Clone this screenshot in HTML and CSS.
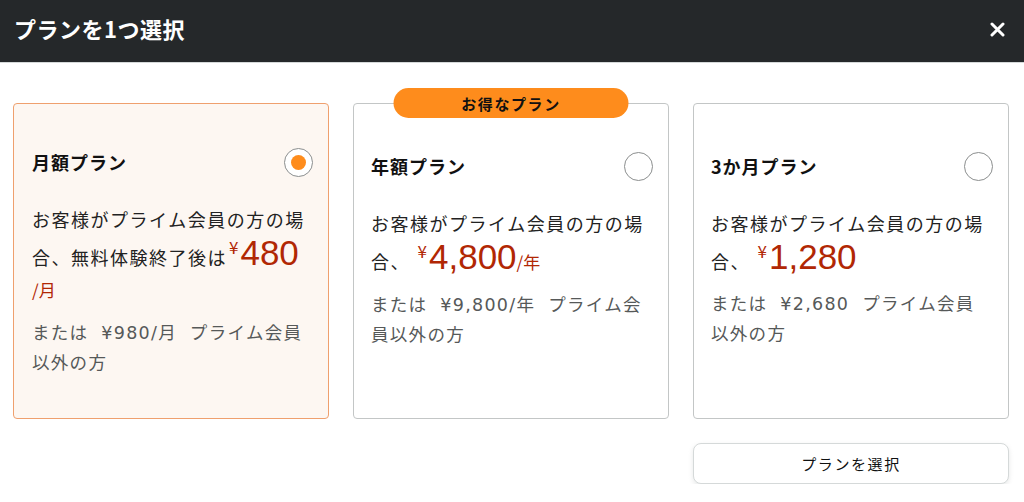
FILE: index.html
```html
<!DOCTYPE html>
<html lang="ja">
<head>
<meta charset="utf-8">
<title>プランを1つ選択</title>
<link rel="stylesheet" href="styles.css">
</head>
<body>
<div class="modal">
  <header class="modal-head">
    <h1 class="modal-title">プランを1つ選択</h1>
    <button class="close" aria-label="閉じる">
      <svg width="15" height="15" viewBox="0 0 15 15"><path d="M2 2 L13 13 M13 2 L2 13" stroke="#fff" stroke-width="3" stroke-linecap="round"/></svg>
    </button>
  </header>
  <main class="plans">
    <div class="card card-selected">
      <div class="card-head">
        <h2 class="card-title">月額プラン</h2>
        <span class="radio radio-on"></span>
      </div>
      <p class="desc">お客様がプライム会員の方の場合、無料体験終了後は<span class="price"><span class="yen">¥</span>480</span><wbr><span class="per">/月</span></p>
      <p class="alt">または ¥980/月 プライム会員以外の方</p>
    </div>
    <div class="card">
      <span class="badge">お得なプラン</span>
      <div class="card-head">
        <h2 class="card-title">年額プラン</h2>
        <span class="radio"></span>
      </div>
      <p class="desc">お客様がプライム会員の方の場合、 <span class="price"><span class="yen">¥</span>4,800</span><span class="per">/年</span></p>
      <p class="alt">または ¥9,800/年 プライム会員以外の方</p>
    </div>
    <div class="card">
      <div class="card-head">
        <h2 class="card-title">3か月プラン</h2>
        <span class="radio"></span>
      </div>
      <p class="desc">お客様がプライム会員の方の場合、 <span class="price"><span class="yen">¥</span>1,280</span></p>
      <p class="alt">または ¥2,680 プライム会員以外の方</p>
    </div>
    <div class="actions">
      <button class="select-btn">プランを選択</button>
    </div>
  </main>
</div>
</body>
</html>
```
FILE: styles.css
```css
* { box-sizing: border-box; }
html, body { margin: 0; padding: 0; background: #fff; }
body {
  font-family: "Noto Sans CJK JP", "Noto Sans", sans-serif;
  color: #0f1111;
}
.modal { width: 1024px; }
.modal-head {
  height: 63px;
  background: #25282a;
  border-bottom: 1px solid #d5d9d9;
  display: flex;
  align-items: center;
  justify-content: space-between;
  padding: 0 19px 0 14px;
}
.modal-title {
  margin: 0;
  color: #fff;
  font-size: 22px;
  font-weight: 700;
  letter-spacing: 0.5px;
  line-height: 1;
  padding-bottom: 6px;
}
.close {
  background: none;
  border: 0;
  padding: 0;
  display: flex;
  margin-bottom: 4px;
}
.plans {
  display: grid;
  grid-template-columns: repeat(3, 1fr);
  column-gap: 24px;
  row-gap: 24px;
  padding: 40px 15px 0 13px;
}
.card {
  position: relative;
  height: 316px;
  border: 1px solid #c3c6c6;
  border-radius: 4px;
  padding: 47px 15px 0 17px;
  background: #fff;
}
.card-selected {
  background: #fdf7f2;
  border-color: #efa06e;
  padding-top: 43px;
  padding-left: 18px;
}
.badge {
  position: absolute;
  top: -16px;
  left: 50%;
  transform: translateX(-50%);
  width: 235px;
  height: 30px;
  border-radius: 15px;
  background: #fe8c1c;
  color: #111;
  font-size: 15px;
  font-weight: 700;
  letter-spacing: 1.6px;
  display: flex;
  align-items: center;
  justify-content: center;
}
.card-head {
  display: flex;
  align-items: center;
  justify-content: space-between;
  height: 30px;
}
.card-title {
  margin: 0;
  font-size: 18px;
  font-weight: 700;
  letter-spacing: 1px;
  color: #111;
}
.radio {
  width: 29px;
  height: 29px;
  border-radius: 50%;
  border: 1.5px solid #8b8e8e;
  background: #fff;
  display: flex;
  align-items: center;
  justify-content: center;
}
.radio-on::after {
  content: "";
  width: 15px;
  height: 15px;
  border-radius: 50%;
  background: #fe8c1c;
}
.desc {
  margin: 26px 0 0;
  padding-right: 2px;
  font-size: 18px;
  line-height: 32px;
  letter-spacing: 1.5px;
  color: #222;
}
.price {
  font-family: "Liberation Sans", "Noto Sans", sans-serif;
  font-size: 35px;
  line-height: 1;
  letter-spacing: 0;
  color: #b12704;
}
.yen {
  font-family: "Noto Sans CJK JP", sans-serif;
  font-size: 17px;
  vertical-align: 11px;
  margin-left: 2px;
  margin-right: 2px;
}
.per {
  font-size: 17px;
  letter-spacing: 0;
  color: #b12704;
  white-space: nowrap;
}
.alt {
  margin: 12px 0 0;
  padding-right: 2px;
  font-family: "DejaVu Sans", "Noto Sans CJK JP", sans-serif;
  font-size: 17.5px;
  line-height: 30px;
  letter-spacing: 1.3px;
  word-spacing: 6px;
  color: #565959;
}
.actions { grid-column: 3; }
.select-btn {
  width: 100%;
  height: 41px;
  border: 1px solid #d5d9d9;
  border-radius: 8px;
  background: #fff;
  box-shadow: 0 2px 5px rgba(213, 217, 217, 0.6);
  font-family: "Noto Sans CJK JP", sans-serif;
  font-size: 15px;
  letter-spacing: 1.6px;
  color: #0f1111;
  padding: 0;
}
```
